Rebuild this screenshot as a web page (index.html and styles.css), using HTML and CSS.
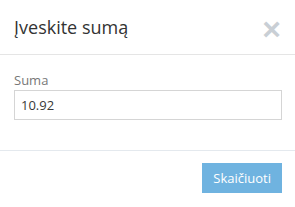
FILE: index.html
```html
<!DOCTYPE html>
<html lang="lt">
<head>
    <meta charset="UTF-8">
    <meta name="viewport" content="width=device-width, initial-scale=1.0">
    <title>Įveskite sumą</title>
    <link rel="stylesheet" href="styles.css">
</head>
<body>
    <div class="modal">
        <div class="modal-header">
            <h4 class="modal-title">Įveskite sumą</h4>
            <button type="button" class="close" aria-label="Uždaryti">&times;</button>
        </div>
        <div class="modal-body">
            <div class="form-group">
                <label for="suma">Suma</label>
                <input id="suma" class="form-control" type="text" value="10.92">
            </div>
        </div>
        <div class="modal-footer">
            <button type="button" class="btn btn-info">Skaičiuoti</button>
        </div>
    </div>
</body>
</html>
```

FILE: styles.css
```css
* {
    box-sizing: border-box;
}

body {
    margin: 0;
    background: #fff;
    font-family: "Open Sans", "Liberation Sans", sans-serif;
    font-size: 13px;
    color: #393939;
}

.modal {
    width: 295px;
    background: #fff;
}

.modal-header {
    display: flex;
    align-items: center;
    justify-content: space-between;
    height: 55px;
    padding: 0 14px;
    border-bottom: 1px solid #e5e5e5;
}

.modal-title {
    margin: 0;
    font-size: 18px;
    font-weight: 400;
    line-height: 26px;
    color: #333;
}

.close {
    display: block;
    padding: 0;
    margin: 4px 0 0 0;
    border: 0;
    background: none;
    font-family: "Liberation Sans", sans-serif;
    font-size: 32px;
    font-weight: bold;
    line-height: 24px;
    height: 24px;
    color: #8a96a3;
    opacity: 0.45;
    cursor: pointer;
}

.modal-body {
    padding: 16px 13px 30px 14px;
    border-bottom: 1px solid #e4e9ee;
}

.form-group label {
    display: block;
    margin-bottom: 1px;
    line-height: 18px;
    color: #777;
}

.form-control {
    display: block;
    width: 100%;
    height: 30px;
    padding: 4px 6px;
    border: 1px solid #d5d5d5;
    border-radius: 0;
    font-family: inherit;
    font-size: 13px;
    color: #393939;
    background: #fff;
}

.modal-footer {
    display: flex;
    justify-content: flex-end;
    padding: 12px 13px 14px;
}

.btn {
    height: 30px;
    padding: 0 11px;
    border: 0;
    border-radius: 0;
    font-family: inherit;
    font-size: 13px;
    line-height: 30px;
    cursor: pointer;
}

.btn-info {
    background: #6fb3e0;
    color: #fff;
}
```
